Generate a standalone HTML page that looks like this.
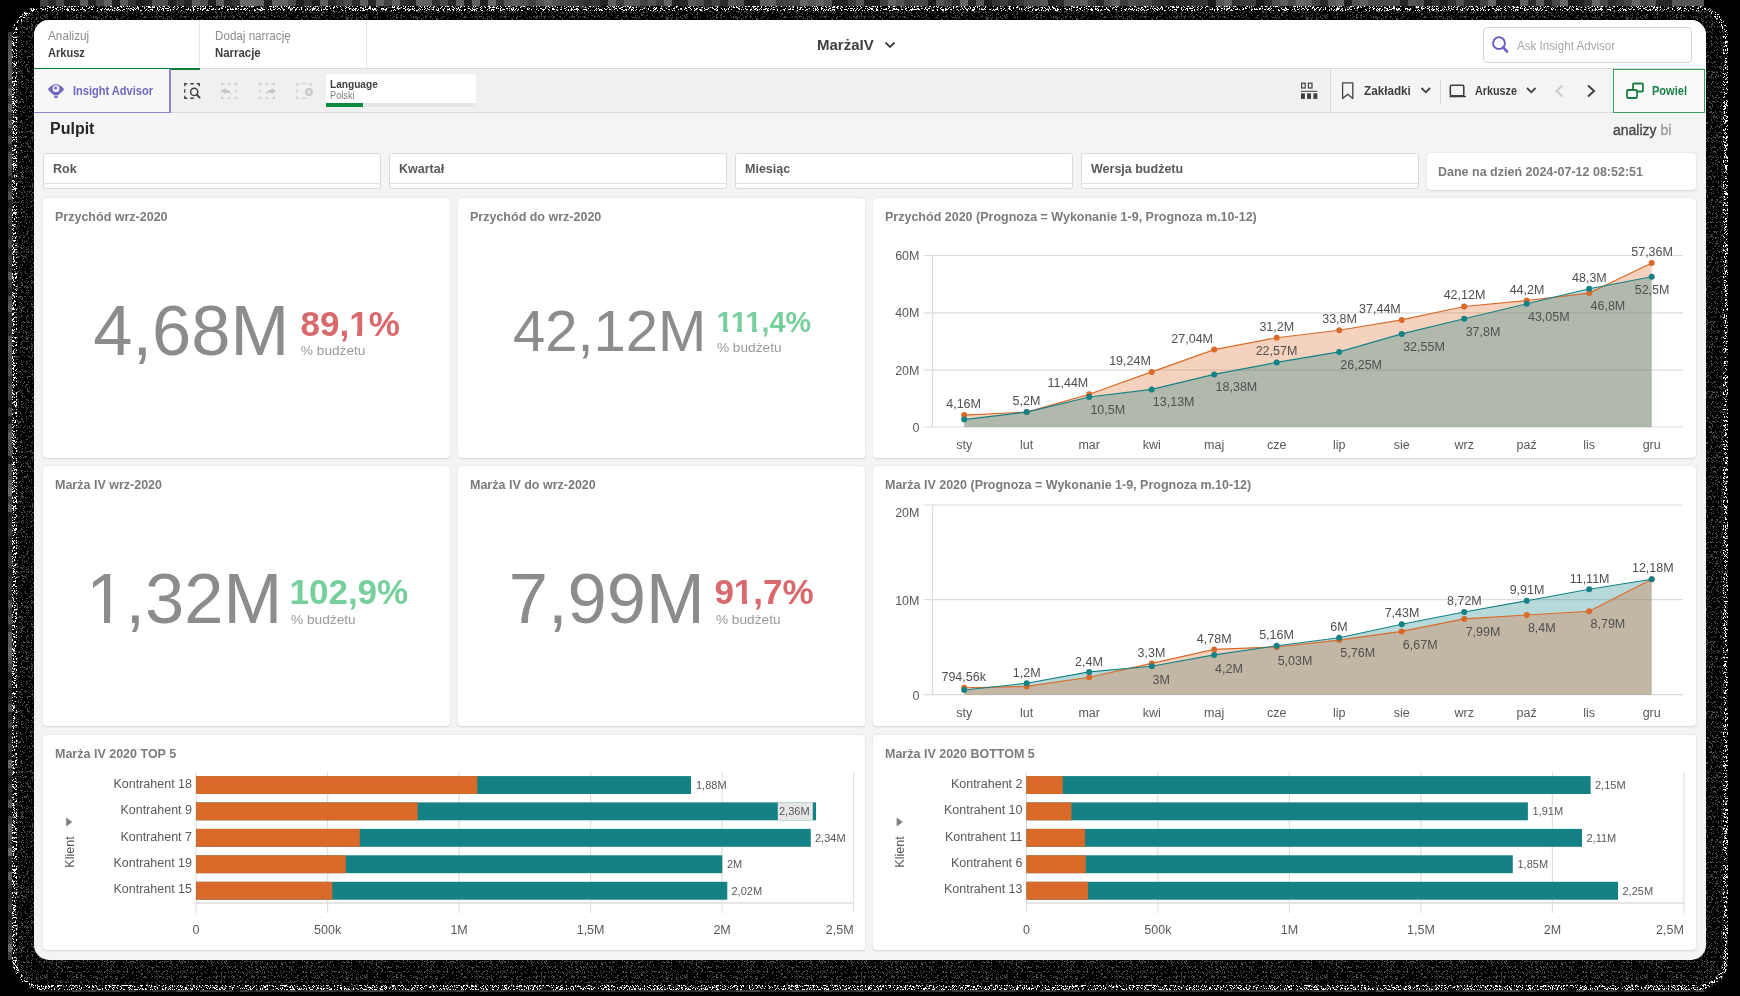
<!DOCTYPE html>
<html><head><meta charset="utf-8">
<style>
*{margin:0;padding:0;box-sizing:border-box}
html,body{width:1740px;height:996px;overflow:hidden;background:#000;font-family:"Liberation Sans",sans-serif}
#root{position:absolute;left:0;top:0;width:1740px;height:996px;will-change:transform}
.a{position:absolute;white-space:nowrap;line-height:1}
.card{position:absolute;background:#fff;border-radius:4px;box-shadow:0 0.5px 2px rgba(0,0,0,.14)}
.ttl{position:absolute;font-size:12.5px;font-weight:bold;color:#7b7b7b;white-space:nowrap;line-height:1}
.flt{position:absolute;top:153px;height:36px;background:#fff;border:1px solid #d9d9d9;border-radius:3px}
.flt span{position:absolute;left:9px;top:9px;font-size:12.5px;font-weight:bold;color:#595959;line-height:1}
.flt i{position:absolute;left:0;right:0;top:29px;height:1px;background:#e0e0e0}
svg{position:absolute;left:0;top:0;overflow:visible}
svg text{font-family:"Liberation Sans",sans-serif}
</style></head><body><div id="root">

<svg width="1740" height="996" style="left:0;top:0"><rect x="40" y="0" width="8" height="6" fill="rgb(66,66,66)"/><rect x="48" y="0" width="8" height="6" fill="rgb(44,44,44)"/><rect x="56" y="0" width="8" height="6" fill="rgb(75,75,75)"/><rect x="64" y="0" width="8" height="6" fill="rgb(31,31,31)"/><rect x="72" y="0" width="8" height="6" fill="rgb(34,34,34)"/><rect x="80" y="0" width="8" height="6" fill="rgb(93,93,93)"/><rect x="88" y="0" width="8" height="6" fill="rgb(37,37,37)"/><rect x="96" y="0" width="8" height="6" fill="rgb(71,71,71)"/><rect x="104" y="0" width="8" height="6" fill="rgb(99,99,99)"/><rect x="112" y="0" width="8" height="6" fill="rgb(32,32,32)"/><rect x="120" y="0" width="8" height="6" fill="rgb(89,89,89)"/><rect x="128" y="0" width="8" height="6" fill="rgb(52,52,52)"/><rect x="136" y="0" width="8" height="6" fill="rgb(29,29,29)"/><rect x="144" y="0" width="8" height="6" fill="rgb(36,36,36)"/><rect x="152" y="0" width="8" height="6" fill="rgb(80,80,80)"/><rect x="160" y="0" width="8" height="6" fill="rgb(78,78,78)"/><rect x="168" y="0" width="8" height="6" fill="rgb(33,33,33)"/><rect x="176" y="0" width="8" height="6" fill="rgb(55,55,55)"/><rect x="184" y="0" width="8" height="6" fill="rgb(36,36,36)"/><rect x="192" y="0" width="8" height="6" fill="rgb(95,95,95)"/><rect x="200" y="0" width="8" height="6" fill="rgb(79,79,79)"/><rect x="208" y="0" width="8" height="6" fill="rgb(32,32,32)"/><rect x="216" y="0" width="8" height="6" fill="rgb(97,97,97)"/><rect x="224" y="0" width="8" height="6" fill="rgb(40,40,40)"/><rect x="232" y="0" width="8" height="6" fill="rgb(53,53,53)"/><rect x="240" y="0" width="8" height="6" fill="rgb(105,105,105)"/><rect x="248" y="0" width="8" height="6" fill="rgb(105,105,105)"/><rect x="256" y="0" width="8" height="6" fill="rgb(99,99,99)"/><rect x="264" y="0" width="8" height="6" fill="rgb(32,32,32)"/><rect x="272" y="0" width="8" height="6" fill="rgb(98,98,98)"/><rect x="280" y="0" width="8" height="6" fill="rgb(99,99,99)"/><rect x="288" y="0" width="8" height="6" fill="rgb(75,75,75)"/><rect x="296" y="0" width="8" height="6" fill="rgb(31,31,31)"/><rect x="304" y="0" width="8" height="6" fill="rgb(53,53,53)"/><rect x="312" y="0" width="8" height="6" fill="rgb(30,30,30)"/><rect x="320" y="0" width="8" height="6" fill="rgb(96,96,96)"/><rect x="328" y="0" width="8" height="6" fill="rgb(42,42,42)"/><rect x="336" y="0" width="8" height="6" fill="rgb(62,62,62)"/><rect x="344" y="0" width="8" height="6" fill="rgb(78,78,78)"/><rect x="352" y="0" width="8" height="6" fill="rgb(43,43,43)"/><rect x="360" y="0" width="8" height="6" fill="rgb(94,94,94)"/><rect x="368" y="0" width="8" height="6" fill="rgb(40,40,40)"/><rect x="376" y="0" width="8" height="6" fill="rgb(98,98,98)"/><rect x="384" y="0" width="8" height="6" fill="rgb(64,64,64)"/><rect x="392" y="0" width="8" height="6" fill="rgb(96,96,96)"/><rect x="400" y="0" width="8" height="6" fill="rgb(48,48,48)"/><rect x="408" y="0" width="8" height="6" fill="rgb(38,38,38)"/><rect x="416" y="0" width="8" height="6" fill="rgb(99,99,99)"/><rect x="424" y="0" width="8" height="6" fill="rgb(98,98,98)"/><rect x="432" y="0" width="8" height="6" fill="rgb(49,49,49)"/><rect x="440" y="0" width="8" height="6" fill="rgb(72,72,72)"/><rect x="448" y="0" width="8" height="6" fill="rgb(37,37,37)"/><rect x="456" y="0" width="8" height="6" fill="rgb(95,95,95)"/><rect x="464" y="0" width="8" height="6" fill="rgb(33,33,33)"/><rect x="472" y="0" width="8" height="6" fill="rgb(97,97,97)"/><rect x="480" y="0" width="8" height="6" fill="rgb(32,32,32)"/><rect x="488" y="0" width="8" height="6" fill="rgb(104,104,104)"/><rect x="496" y="0" width="8" height="6" fill="rgb(51,51,51)"/><rect x="504" y="0" width="8" height="6" fill="rgb(88,88,88)"/><rect x="512" y="0" width="8" height="6" fill="rgb(93,93,93)"/><rect x="520" y="0" width="8" height="6" fill="rgb(79,79,79)"/><rect x="528" y="0" width="8" height="6" fill="rgb(65,65,65)"/><rect x="536" y="0" width="8" height="6" fill="rgb(84,84,84)"/><rect x="544" y="0" width="8" height="6" fill="rgb(99,99,99)"/><rect x="552" y="0" width="8" height="6" fill="rgb(83,83,83)"/><rect x="560" y="0" width="8" height="6" fill="rgb(71,71,71)"/><rect x="568" y="0" width="8" height="6" fill="rgb(63,63,63)"/><rect x="576" y="0" width="8" height="6" fill="rgb(56,56,56)"/><rect x="584" y="0" width="8" height="6" fill="rgb(48,48,48)"/><rect x="592" y="0" width="8" height="6" fill="rgb(56,56,56)"/><rect x="600" y="0" width="8" height="6" fill="rgb(35,35,35)"/><rect x="608" y="0" width="8" height="6" fill="rgb(98,98,98)"/><rect x="616" y="0" width="8" height="6" fill="rgb(63,63,63)"/><rect x="624" y="0" width="8" height="6" fill="rgb(92,92,92)"/><rect x="632" y="0" width="8" height="6" fill="rgb(88,88,88)"/><rect x="640" y="0" width="8" height="6" fill="rgb(68,68,68)"/><rect x="648" y="0" width="8" height="6" fill="rgb(82,82,82)"/><rect x="656" y="0" width="8" height="6" fill="rgb(61,61,61)"/><rect x="664" y="0" width="8" height="6" fill="rgb(102,102,102)"/><rect x="672" y="0" width="8" height="6" fill="rgb(34,34,34)"/><rect x="680" y="0" width="8" height="6" fill="rgb(40,40,40)"/><rect x="688" y="0" width="8" height="6" fill="rgb(90,90,90)"/><rect x="696" y="0" width="8" height="6" fill="rgb(78,78,78)"/><rect x="704" y="0" width="8" height="6" fill="rgb(46,46,46)"/><rect x="712" y="0" width="8" height="6" fill="rgb(68,68,68)"/><rect x="720" y="0" width="8" height="6" fill="rgb(44,44,44)"/><rect x="728" y="0" width="8" height="6" fill="rgb(87,87,87)"/><rect x="736" y="0" width="8" height="6" fill="rgb(78,78,78)"/><rect x="744" y="0" width="8" height="6" fill="rgb(30,30,30)"/><rect x="752" y="0" width="8" height="6" fill="rgb(34,34,34)"/><rect x="760" y="0" width="8" height="6" fill="rgb(96,96,96)"/><rect x="768" y="0" width="8" height="6" fill="rgb(98,98,98)"/><rect x="776" y="0" width="8" height="6" fill="rgb(65,65,65)"/><rect x="784" y="0" width="8" height="6" fill="rgb(68,68,68)"/><rect x="792" y="0" width="8" height="6" fill="rgb(69,69,69)"/><rect x="800" y="0" width="8" height="6" fill="rgb(101,101,101)"/><rect x="808" y="0" width="8" height="6" fill="rgb(88,88,88)"/><rect x="816" y="0" width="8" height="6" fill="rgb(99,99,99)"/><rect x="824" y="0" width="8" height="6" fill="rgb(83,83,83)"/><rect x="832" y="0" width="8" height="6" fill="rgb(33,33,33)"/><rect x="840" y="0" width="8" height="6" fill="rgb(36,36,36)"/><rect x="848" y="0" width="8" height="6" fill="rgb(59,59,59)"/><rect x="856" y="0" width="8" height="6" fill="rgb(85,85,85)"/><rect x="864" y="0" width="8" height="6" fill="rgb(33,33,33)"/><rect x="872" y="0" width="8" height="6" fill="rgb(32,32,32)"/><rect x="880" y="0" width="8" height="6" fill="rgb(64,64,64)"/><rect x="888" y="0" width="8" height="6" fill="rgb(98,98,98)"/><rect x="896" y="0" width="8" height="6" fill="rgb(82,82,82)"/><rect x="904" y="0" width="8" height="6" fill="rgb(61,61,61)"/><rect x="912" y="0" width="8" height="6" fill="rgb(74,74,74)"/><rect x="920" y="0" width="8" height="6" fill="rgb(69,69,69)"/><rect x="928" y="0" width="8" height="6" fill="rgb(27,27,27)"/><rect x="936" y="0" width="8" height="6" fill="rgb(84,84,84)"/><rect x="944" y="0" width="8" height="6" fill="rgb(70,70,70)"/><rect x="952" y="0" width="8" height="6" fill="rgb(46,46,46)"/><rect x="960" y="0" width="8" height="6" fill="rgb(103,103,103)"/><rect x="968" y="0" width="8" height="6" fill="rgb(39,39,39)"/><rect x="976" y="0" width="8" height="6" fill="rgb(88,88,88)"/><rect x="984" y="0" width="8" height="6" fill="rgb(32,32,32)"/><rect x="992" y="0" width="8" height="6" fill="rgb(52,52,52)"/><rect x="1000" y="0" width="8" height="6" fill="rgb(61,61,61)"/><rect x="1008" y="0" width="8" height="6" fill="rgb(41,41,41)"/><rect x="1016" y="0" width="8" height="6" fill="rgb(56,56,56)"/><rect x="1024" y="0" width="8" height="6" fill="rgb(75,75,75)"/><rect x="1032" y="0" width="8" height="6" fill="rgb(75,75,75)"/><rect x="1040" y="0" width="8" height="6" fill="rgb(88,88,88)"/><rect x="1048" y="0" width="8" height="6" fill="rgb(35,35,35)"/><rect x="1056" y="0" width="8" height="6" fill="rgb(46,46,46)"/><rect x="1064" y="0" width="8" height="6" fill="rgb(82,82,82)"/><rect x="1072" y="0" width="8" height="6" fill="rgb(76,76,76)"/><rect x="1080" y="0" width="8" height="6" fill="rgb(95,95,95)"/><rect x="1088" y="0" width="8" height="6" fill="rgb(60,60,60)"/><rect x="1096" y="0" width="8" height="6" fill="rgb(42,42,42)"/><rect x="1104" y="0" width="8" height="6" fill="rgb(80,80,80)"/><rect x="1112" y="0" width="8" height="6" fill="rgb(95,95,95)"/><rect x="1120" y="0" width="8" height="6" fill="rgb(60,60,60)"/><rect x="1128" y="0" width="8" height="6" fill="rgb(78,78,78)"/><rect x="1136" y="0" width="8" height="6" fill="rgb(70,70,70)"/><rect x="1144" y="0" width="8" height="6" fill="rgb(73,73,73)"/><rect x="1152" y="0" width="8" height="6" fill="rgb(54,54,54)"/><rect x="1160" y="0" width="8" height="6" fill="rgb(44,44,44)"/><rect x="1168" y="0" width="8" height="6" fill="rgb(35,35,35)"/><rect x="1176" y="0" width="8" height="6" fill="rgb(47,47,47)"/><rect x="1184" y="0" width="8" height="6" fill="rgb(44,44,44)"/><rect x="1192" y="0" width="8" height="6" fill="rgb(54,54,54)"/><rect x="1200" y="0" width="8" height="6" fill="rgb(54,54,54)"/><rect x="1208" y="0" width="8" height="6" fill="rgb(26,26,26)"/><rect x="1216" y="0" width="8" height="6" fill="rgb(87,87,87)"/><rect x="1224" y="0" width="8" height="6" fill="rgb(100,100,100)"/><rect x="1232" y="0" width="8" height="6" fill="rgb(48,48,48)"/><rect x="1240" y="0" width="8" height="6" fill="rgb(58,58,58)"/><rect x="1248" y="0" width="8" height="6" fill="rgb(61,61,61)"/><rect x="1256" y="0" width="8" height="6" fill="rgb(25,25,25)"/><rect x="1264" y="0" width="8" height="6" fill="rgb(43,43,43)"/><rect x="1272" y="0" width="8" height="6" fill="rgb(78,78,78)"/><rect x="1280" y="0" width="8" height="6" fill="rgb(93,93,93)"/><rect x="1288" y="0" width="8" height="6" fill="rgb(72,72,72)"/><rect x="1296" y="0" width="8" height="6" fill="rgb(103,103,103)"/><rect x="1304" y="0" width="8" height="6" fill="rgb(97,97,97)"/><rect x="1312" y="0" width="8" height="6" fill="rgb(65,65,65)"/><rect x="1320" y="0" width="8" height="6" fill="rgb(41,41,41)"/><rect x="1328" y="0" width="8" height="6" fill="rgb(90,90,90)"/><rect x="1336" y="0" width="8" height="6" fill="rgb(104,104,104)"/><rect x="1344" y="0" width="8" height="6" fill="rgb(31,31,31)"/><rect x="1352" y="0" width="8" height="6" fill="rgb(83,83,83)"/><rect x="1360" y="0" width="8" height="6" fill="rgb(96,96,96)"/><rect x="1368" y="0" width="8" height="6" fill="rgb(75,75,75)"/><rect x="1376" y="0" width="8" height="6" fill="rgb(75,75,75)"/><rect x="1384" y="0" width="8" height="6" fill="rgb(76,76,76)"/><rect x="1392" y="0" width="8" height="6" fill="rgb(75,75,75)"/><rect x="1400" y="0" width="8" height="6" fill="rgb(38,38,38)"/><rect x="1408" y="0" width="8" height="6" fill="rgb(86,86,86)"/><rect x="1416" y="0" width="8" height="6" fill="rgb(76,76,76)"/><rect x="1424" y="0" width="8" height="6" fill="rgb(32,32,32)"/><rect x="1432" y="0" width="8" height="6" fill="rgb(49,49,49)"/><rect x="1440" y="0" width="8" height="6" fill="rgb(33,33,33)"/><rect x="1448" y="0" width="8" height="6" fill="rgb(51,51,51)"/><rect x="1456" y="0" width="8" height="6" fill="rgb(81,81,81)"/><rect x="1464" y="0" width="8" height="6" fill="rgb(45,45,45)"/><rect x="1472" y="0" width="8" height="6" fill="rgb(39,39,39)"/><rect x="1480" y="0" width="8" height="6" fill="rgb(68,68,68)"/><rect x="1488" y="0" width="8" height="6" fill="rgb(101,101,101)"/><rect x="1496" y="0" width="8" height="6" fill="rgb(31,31,31)"/><rect x="1504" y="0" width="8" height="6" fill="rgb(38,38,38)"/><rect x="1512" y="0" width="8" height="6" fill="rgb(25,25,25)"/><rect x="1520" y="0" width="8" height="6" fill="rgb(97,97,97)"/><rect x="1528" y="0" width="8" height="6" fill="rgb(44,44,44)"/><rect x="1536" y="0" width="8" height="6" fill="rgb(93,93,93)"/><rect x="1544" y="0" width="8" height="6" fill="rgb(37,37,37)"/><rect x="1552" y="0" width="8" height="6" fill="rgb(71,71,71)"/><rect x="1560" y="0" width="8" height="6" fill="rgb(103,103,103)"/><rect x="1568" y="0" width="8" height="6" fill="rgb(28,28,28)"/><rect x="1576" y="0" width="8" height="6" fill="rgb(34,34,34)"/><rect x="1584" y="0" width="8" height="6" fill="rgb(51,51,51)"/><rect x="1592" y="0" width="8" height="6" fill="rgb(103,103,103)"/><rect x="1600" y="0" width="8" height="6" fill="rgb(73,73,73)"/><rect x="1608" y="0" width="8" height="6" fill="rgb(44,44,44)"/><rect x="1616" y="0" width="8" height="6" fill="rgb(57,57,57)"/><rect x="1624" y="0" width="8" height="6" fill="rgb(69,69,69)"/><rect x="1632" y="0" width="8" height="6" fill="rgb(102,102,102)"/><rect x="1640" y="0" width="8" height="6" fill="rgb(71,71,71)"/><rect x="1648" y="0" width="8" height="6" fill="rgb(85,85,85)"/><rect x="1656" y="0" width="8" height="6" fill="rgb(40,40,40)"/><rect x="1664" y="0" width="8" height="6" fill="rgb(39,39,39)"/><rect x="1672" y="0" width="8" height="6" fill="rgb(87,87,87)"/><rect x="1680" y="0" width="8" height="6" fill="rgb(84,84,84)"/><rect x="1688" y="0" width="8" height="6" fill="rgb(86,86,86)"/><rect x="1696" y="0" width="8" height="6" fill="rgb(86,86,86)"/><rect x="40" y="990" width="8" height="2" fill="rgb(39,39,39)"/><rect x="48" y="990" width="8" height="2" fill="rgb(25,25,25)"/><rect x="56" y="990" width="8" height="2" fill="rgb(29,29,29)"/><rect x="64" y="990" width="8" height="2" fill="rgb(26,26,26)"/><rect x="72" y="990" width="8" height="2" fill="rgb(67,67,67)"/><rect x="80" y="990" width="8" height="2" fill="rgb(41,41,41)"/><rect x="88" y="990" width="8" height="2" fill="rgb(67,67,67)"/><rect x="96" y="990" width="8" height="2" fill="rgb(36,36,36)"/><rect x="104" y="990" width="8" height="2" fill="rgb(50,50,50)"/><rect x="112" y="990" width="8" height="2" fill="rgb(64,64,64)"/><rect x="120" y="990" width="8" height="2" fill="rgb(30,30,30)"/><rect x="128" y="990" width="8" height="2" fill="rgb(53,53,53)"/><rect x="136" y="990" width="8" height="2" fill="rgb(21,21,21)"/><rect x="144" y="990" width="8" height="2" fill="rgb(33,33,33)"/><rect x="152" y="990" width="8" height="2" fill="rgb(53,53,53)"/><rect x="160" y="990" width="8" height="2" fill="rgb(43,43,43)"/><rect x="168" y="990" width="8" height="2" fill="rgb(29,29,29)"/><rect x="176" y="990" width="8" height="2" fill="rgb(64,64,64)"/><rect x="184" y="990" width="8" height="2" fill="rgb(54,54,54)"/><rect x="192" y="990" width="8" height="2" fill="rgb(21,21,21)"/><rect x="200" y="990" width="8" height="2" fill="rgb(68,68,68)"/><rect x="208" y="990" width="8" height="2" fill="rgb(53,53,53)"/><rect x="216" y="990" width="8" height="2" fill="rgb(39,39,39)"/><rect x="224" y="990" width="8" height="2" fill="rgb(61,61,61)"/><rect x="232" y="990" width="8" height="2" fill="rgb(25,25,25)"/><rect x="240" y="990" width="8" height="2" fill="rgb(64,64,64)"/><rect x="248" y="990" width="8" height="2" fill="rgb(36,36,36)"/><rect x="256" y="990" width="8" height="2" fill="rgb(53,53,53)"/><rect x="264" y="990" width="8" height="2" fill="rgb(43,43,43)"/><rect x="272" y="990" width="8" height="2" fill="rgb(30,30,30)"/><rect x="280" y="990" width="8" height="2" fill="rgb(42,42,42)"/><rect x="288" y="990" width="8" height="2" fill="rgb(69,69,69)"/><rect x="296" y="990" width="8" height="2" fill="rgb(34,34,34)"/><rect x="304" y="990" width="8" height="2" fill="rgb(54,54,54)"/><rect x="312" y="990" width="8" height="2" fill="rgb(54,54,54)"/><rect x="320" y="990" width="8" height="2" fill="rgb(69,69,69)"/><rect x="328" y="990" width="8" height="2" fill="rgb(52,52,52)"/><rect x="336" y="990" width="8" height="2" fill="rgb(41,41,41)"/><rect x="344" y="990" width="8" height="2" fill="rgb(60,60,60)"/><rect x="352" y="990" width="8" height="2" fill="rgb(34,34,34)"/><rect x="360" y="990" width="8" height="2" fill="rgb(59,59,59)"/><rect x="368" y="990" width="8" height="2" fill="rgb(70,70,70)"/><rect x="376" y="990" width="8" height="2" fill="rgb(68,68,68)"/><rect x="384" y="990" width="8" height="2" fill="rgb(32,32,32)"/><rect x="392" y="990" width="8" height="2" fill="rgb(35,35,35)"/><rect x="400" y="990" width="8" height="2" fill="rgb(45,45,45)"/><rect x="408" y="990" width="8" height="2" fill="rgb(67,67,67)"/><rect x="416" y="990" width="8" height="2" fill="rgb(34,34,34)"/><rect x="424" y="990" width="8" height="2" fill="rgb(32,32,32)"/><rect x="432" y="990" width="8" height="2" fill="rgb(53,53,53)"/><rect x="440" y="990" width="8" height="2" fill="rgb(51,51,51)"/><rect x="448" y="990" width="8" height="2" fill="rgb(42,42,42)"/><rect x="456" y="990" width="8" height="2" fill="rgb(66,66,66)"/><rect x="464" y="990" width="8" height="2" fill="rgb(21,21,21)"/><rect x="472" y="990" width="8" height="2" fill="rgb(21,21,21)"/><rect x="480" y="990" width="8" height="2" fill="rgb(70,70,70)"/><rect x="488" y="990" width="8" height="2" fill="rgb(37,37,37)"/><rect x="496" y="990" width="8" height="2" fill="rgb(50,50,50)"/><rect x="504" y="990" width="8" height="2" fill="rgb(36,36,36)"/><rect x="512" y="990" width="8" height="2" fill="rgb(32,32,32)"/><rect x="520" y="990" width="8" height="2" fill="rgb(64,64,64)"/><rect x="528" y="990" width="8" height="2" fill="rgb(58,58,58)"/><rect x="536" y="990" width="8" height="2" fill="rgb(42,42,42)"/><rect x="544" y="990" width="8" height="2" fill="rgb(48,48,48)"/><rect x="552" y="990" width="8" height="2" fill="rgb(66,66,66)"/><rect x="560" y="990" width="8" height="2" fill="rgb(42,42,42)"/><rect x="568" y="990" width="8" height="2" fill="rgb(43,43,43)"/><rect x="576" y="990" width="8" height="2" fill="rgb(25,25,25)"/><rect x="584" y="990" width="8" height="2" fill="rgb(34,34,34)"/><rect x="592" y="990" width="8" height="2" fill="rgb(26,26,26)"/><rect x="600" y="990" width="8" height="2" fill="rgb(34,34,34)"/><rect x="608" y="990" width="8" height="2" fill="rgb(50,50,50)"/><rect x="616" y="990" width="8" height="2" fill="rgb(32,32,32)"/><rect x="624" y="990" width="8" height="2" fill="rgb(41,41,41)"/><rect x="632" y="990" width="8" height="2" fill="rgb(33,33,33)"/><rect x="640" y="990" width="8" height="2" fill="rgb(50,50,50)"/><rect x="648" y="990" width="8" height="2" fill="rgb(59,59,59)"/><rect x="656" y="990" width="8" height="2" fill="rgb(59,59,59)"/><rect x="664" y="990" width="8" height="2" fill="rgb(20,20,20)"/><rect x="672" y="990" width="8" height="2" fill="rgb(50,50,50)"/><rect x="680" y="990" width="8" height="2" fill="rgb(61,61,61)"/><rect x="688" y="990" width="8" height="2" fill="rgb(42,42,42)"/><rect x="696" y="990" width="8" height="2" fill="rgb(61,61,61)"/><rect x="704" y="990" width="8" height="2" fill="rgb(25,25,25)"/><rect x="712" y="990" width="8" height="2" fill="rgb(62,62,62)"/><rect x="720" y="990" width="8" height="2" fill="rgb(27,27,27)"/><rect x="728" y="990" width="8" height="2" fill="rgb(44,44,44)"/><rect x="736" y="990" width="8" height="2" fill="rgb(70,70,70)"/><rect x="744" y="990" width="8" height="2" fill="rgb(65,65,65)"/><rect x="752" y="990" width="8" height="2" fill="rgb(68,68,68)"/><rect x="760" y="990" width="8" height="2" fill="rgb(32,32,32)"/><rect x="768" y="990" width="8" height="2" fill="rgb(50,50,50)"/><rect x="776" y="990" width="8" height="2" fill="rgb(31,31,31)"/><rect x="784" y="990" width="8" height="2" fill="rgb(47,47,47)"/><rect x="792" y="990" width="8" height="2" fill="rgb(70,70,70)"/><rect x="800" y="990" width="8" height="2" fill="rgb(60,60,60)"/><rect x="808" y="990" width="8" height="2" fill="rgb(41,41,41)"/><rect x="816" y="990" width="8" height="2" fill="rgb(25,25,25)"/><rect x="824" y="990" width="8" height="2" fill="rgb(66,66,66)"/><rect x="832" y="990" width="8" height="2" fill="rgb(45,45,45)"/><rect x="840" y="990" width="8" height="2" fill="rgb(49,49,49)"/><rect x="848" y="990" width="8" height="2" fill="rgb(45,45,45)"/><rect x="856" y="990" width="8" height="2" fill="rgb(67,67,67)"/><rect x="864" y="990" width="8" height="2" fill="rgb(25,25,25)"/><rect x="872" y="990" width="8" height="2" fill="rgb(66,66,66)"/><rect x="880" y="990" width="8" height="2" fill="rgb(30,30,30)"/><rect x="888" y="990" width="8" height="2" fill="rgb(30,30,30)"/><rect x="896" y="990" width="8" height="2" fill="rgb(28,28,28)"/><rect x="904" y="990" width="8" height="2" fill="rgb(21,21,21)"/><rect x="912" y="990" width="8" height="2" fill="rgb(29,29,29)"/><rect x="920" y="990" width="8" height="2" fill="rgb(57,57,57)"/><rect x="928" y="990" width="8" height="2" fill="rgb(49,49,49)"/><rect x="936" y="990" width="8" height="2" fill="rgb(61,61,61)"/><rect x="944" y="990" width="8" height="2" fill="rgb(29,29,29)"/><rect x="952" y="990" width="8" height="2" fill="rgb(59,59,59)"/><rect x="960" y="990" width="8" height="2" fill="rgb(58,58,58)"/><rect x="968" y="990" width="8" height="2" fill="rgb(50,50,50)"/><rect x="976" y="990" width="8" height="2" fill="rgb(62,62,62)"/><rect x="984" y="990" width="8" height="2" fill="rgb(42,42,42)"/><rect x="992" y="990" width="8" height="2" fill="rgb(29,29,29)"/><rect x="1000" y="990" width="8" height="2" fill="rgb(55,55,55)"/><rect x="1008" y="990" width="8" height="2" fill="rgb(55,55,55)"/><rect x="1016" y="990" width="8" height="2" fill="rgb(28,28,28)"/><rect x="1024" y="990" width="8" height="2" fill="rgb(21,21,21)"/><rect x="1032" y="990" width="8" height="2" fill="rgb(20,20,20)"/><rect x="1040" y="990" width="8" height="2" fill="rgb(66,66,66)"/><rect x="1048" y="990" width="8" height="2" fill="rgb(61,61,61)"/><rect x="1056" y="990" width="8" height="2" fill="rgb(26,26,26)"/><rect x="1064" y="990" width="8" height="2" fill="rgb(53,53,53)"/><rect x="1072" y="990" width="8" height="2" fill="rgb(67,67,67)"/><rect x="1080" y="990" width="8" height="2" fill="rgb(28,28,28)"/><rect x="1088" y="990" width="8" height="2" fill="rgb(47,47,47)"/><rect x="1096" y="990" width="8" height="2" fill="rgb(32,32,32)"/><rect x="1104" y="990" width="8" height="2" fill="rgb(33,33,33)"/><rect x="1112" y="990" width="8" height="2" fill="rgb(21,21,21)"/><rect x="1120" y="990" width="8" height="2" fill="rgb(36,36,36)"/><rect x="1128" y="990" width="8" height="2" fill="rgb(33,33,33)"/><rect x="1136" y="990" width="8" height="2" fill="rgb(38,38,38)"/><rect x="1144" y="990" width="8" height="2" fill="rgb(52,52,52)"/><rect x="1152" y="990" width="8" height="2" fill="rgb(35,35,35)"/><rect x="1160" y="990" width="8" height="2" fill="rgb(68,68,68)"/><rect x="1168" y="990" width="8" height="2" fill="rgb(57,57,57)"/><rect x="1176" y="990" width="8" height="2" fill="rgb(40,40,40)"/><rect x="1184" y="990" width="8" height="2" fill="rgb(36,36,36)"/><rect x="1192" y="990" width="8" height="2" fill="rgb(54,54,54)"/><rect x="1200" y="990" width="8" height="2" fill="rgb(46,46,46)"/><rect x="1208" y="990" width="8" height="2" fill="rgb(28,28,28)"/><rect x="1216" y="990" width="8" height="2" fill="rgb(23,23,23)"/><rect x="1224" y="990" width="8" height="2" fill="rgb(67,67,67)"/><rect x="1232" y="990" width="8" height="2" fill="rgb(42,42,42)"/><rect x="1240" y="990" width="8" height="2" fill="rgb(49,49,49)"/><rect x="1248" y="990" width="8" height="2" fill="rgb(62,62,62)"/><rect x="1256" y="990" width="8" height="2" fill="rgb(57,57,57)"/><rect x="1264" y="990" width="8" height="2" fill="rgb(53,53,53)"/><rect x="1272" y="990" width="8" height="2" fill="rgb(46,46,46)"/><rect x="1280" y="990" width="8" height="2" fill="rgb(52,52,52)"/><rect x="1288" y="990" width="8" height="2" fill="rgb(28,28,28)"/><rect x="1296" y="990" width="8" height="2" fill="rgb(54,54,54)"/><rect x="1304" y="990" width="8" height="2" fill="rgb(29,29,29)"/><rect x="1312" y="990" width="8" height="2" fill="rgb(53,53,53)"/><rect x="1320" y="990" width="8" height="2" fill="rgb(52,52,52)"/><rect x="1328" y="990" width="8" height="2" fill="rgb(21,21,21)"/><rect x="1336" y="990" width="8" height="2" fill="rgb(48,48,48)"/><rect x="1344" y="990" width="8" height="2" fill="rgb(69,69,69)"/><rect x="1352" y="990" width="8" height="2" fill="rgb(31,31,31)"/><rect x="1360" y="990" width="8" height="2" fill="rgb(58,58,58)"/><rect x="1368" y="990" width="8" height="2" fill="rgb(20,20,20)"/><rect x="1376" y="990" width="8" height="2" fill="rgb(69,69,69)"/><rect x="1384" y="990" width="8" height="2" fill="rgb(29,29,29)"/><rect x="1392" y="990" width="8" height="2" fill="rgb(31,31,31)"/><rect x="1400" y="990" width="8" height="2" fill="rgb(29,29,29)"/><rect x="1408" y="990" width="8" height="2" fill="rgb(50,50,50)"/><rect x="1416" y="990" width="8" height="2" fill="rgb(59,59,59)"/><rect x="1424" y="990" width="8" height="2" fill="rgb(66,66,66)"/><rect x="1432" y="990" width="8" height="2" fill="rgb(27,27,27)"/><rect x="1440" y="990" width="8" height="2" fill="rgb(55,55,55)"/><rect x="1448" y="990" width="8" height="2" fill="rgb(23,23,23)"/><rect x="1456" y="990" width="8" height="2" fill="rgb(40,40,40)"/><rect x="1464" y="990" width="8" height="2" fill="rgb(63,63,63)"/><rect x="1472" y="990" width="8" height="2" fill="rgb(53,53,53)"/><rect x="1480" y="990" width="8" height="2" fill="rgb(53,53,53)"/><rect x="1488" y="990" width="8" height="2" fill="rgb(55,55,55)"/><rect x="1496" y="990" width="8" height="2" fill="rgb(50,50,50)"/><rect x="1504" y="990" width="8" height="2" fill="rgb(70,70,70)"/><rect x="1512" y="990" width="8" height="2" fill="rgb(69,69,69)"/><rect x="1520" y="990" width="8" height="2" fill="rgb(26,26,26)"/><rect x="1528" y="990" width="8" height="2" fill="rgb(55,55,55)"/><rect x="1536" y="990" width="8" height="2" fill="rgb(23,23,23)"/><rect x="1544" y="990" width="8" height="2" fill="rgb(35,35,35)"/><rect x="1552" y="990" width="8" height="2" fill="rgb(32,32,32)"/><rect x="1560" y="990" width="8" height="2" fill="rgb(37,37,37)"/><rect x="1568" y="990" width="8" height="2" fill="rgb(22,22,22)"/><rect x="1576" y="990" width="8" height="2" fill="rgb(69,69,69)"/><rect x="1584" y="990" width="8" height="2" fill="rgb(26,26,26)"/><rect x="1592" y="990" width="8" height="2" fill="rgb(52,52,52)"/><rect x="1600" y="990" width="8" height="2" fill="rgb(48,48,48)"/><rect x="1608" y="990" width="8" height="2" fill="rgb(55,55,55)"/><rect x="1616" y="990" width="8" height="2" fill="rgb(21,21,21)"/><rect x="1624" y="990" width="8" height="2" fill="rgb(68,68,68)"/><rect x="1632" y="990" width="8" height="2" fill="rgb(24,24,24)"/><rect x="1640" y="990" width="8" height="2" fill="rgb(48,48,48)"/><rect x="1648" y="990" width="8" height="2" fill="rgb(40,40,40)"/><rect x="1656" y="990" width="8" height="2" fill="rgb(59,59,59)"/><rect x="1664" y="990" width="8" height="2" fill="rgb(52,52,52)"/><rect x="1672" y="990" width="8" height="2" fill="rgb(58,58,58)"/><rect x="1680" y="990" width="8" height="2" fill="rgb(52,52,52)"/><rect x="1688" y="990" width="8" height="2" fill="rgb(32,32,32)"/><rect x="1696" y="990" width="8" height="2" fill="rgb(64,64,64)"/><rect x="8" y="32" width="4" height="8" fill="rgb(60,60,60)"/><rect x="8" y="40" width="4" height="8" fill="rgb(82,82,82)"/><rect x="8" y="48" width="4" height="8" fill="rgb(90,90,90)"/><rect x="8" y="56" width="4" height="8" fill="rgb(93,93,93)"/><rect x="8" y="64" width="4" height="8" fill="rgb(86,86,86)"/><rect x="8" y="72" width="4" height="8" fill="rgb(89,89,89)"/><rect x="8" y="80" width="4" height="8" fill="rgb(56,56,56)"/><rect x="8" y="88" width="4" height="8" fill="rgb(91,91,91)"/><rect x="8" y="96" width="4" height="8" fill="rgb(58,58,58)"/><rect x="8" y="104" width="4" height="8" fill="rgb(96,96,96)"/><rect x="8" y="112" width="4" height="8" fill="rgb(50,50,50)"/><rect x="8" y="120" width="4" height="8" fill="rgb(82,82,82)"/><rect x="8" y="128" width="4" height="8" fill="rgb(42,42,42)"/><rect x="8" y="136" width="4" height="8" fill="rgb(78,78,78)"/><rect x="8" y="144" width="4" height="8" fill="rgb(40,40,40)"/><rect x="8" y="152" width="4" height="8" fill="rgb(75,75,75)"/><rect x="8" y="160" width="4" height="8" fill="rgb(81,81,81)"/><rect x="8" y="168" width="4" height="8" fill="rgb(65,65,65)"/><rect x="8" y="176" width="4" height="8" fill="rgb(34,34,34)"/><rect x="8" y="184" width="4" height="8" fill="rgb(55,55,55)"/><rect x="8" y="192" width="4" height="8" fill="rgb(79,79,79)"/><rect x="8" y="200" width="4" height="8" fill="rgb(34,34,34)"/><rect x="8" y="208" width="4" height="8" fill="rgb(52,52,52)"/><rect x="8" y="216" width="4" height="8" fill="rgb(63,63,63)"/><rect x="8" y="224" width="4" height="8" fill="rgb(40,40,40)"/><rect x="8" y="232" width="4" height="8" fill="rgb(44,44,44)"/><rect x="8" y="240" width="4" height="8" fill="rgb(71,71,71)"/><rect x="8" y="248" width="4" height="8" fill="rgb(43,43,43)"/><rect x="8" y="256" width="4" height="8" fill="rgb(57,57,57)"/><rect x="8" y="264" width="4" height="8" fill="rgb(42,42,42)"/><rect x="8" y="272" width="4" height="8" fill="rgb(84,84,84)"/><rect x="8" y="280" width="4" height="8" fill="rgb(53,53,53)"/><rect x="8" y="288" width="4" height="8" fill="rgb(37,37,37)"/><rect x="8" y="296" width="4" height="8" fill="rgb(75,75,75)"/><rect x="8" y="304" width="4" height="8" fill="rgb(87,87,87)"/><rect x="8" y="312" width="4" height="8" fill="rgb(45,45,45)"/><rect x="8" y="320" width="4" height="8" fill="rgb(53,53,53)"/><rect x="8" y="328" width="4" height="8" fill="rgb(45,45,45)"/><rect x="8" y="336" width="4" height="8" fill="rgb(80,80,80)"/><rect x="8" y="344" width="4" height="8" fill="rgb(90,90,90)"/><rect x="8" y="352" width="4" height="8" fill="rgb(76,76,76)"/><rect x="8" y="360" width="4" height="8" fill="rgb(68,68,68)"/><rect x="8" y="368" width="4" height="8" fill="rgb(78,78,78)"/><rect x="8" y="376" width="4" height="8" fill="rgb(50,50,50)"/><rect x="8" y="384" width="4" height="8" fill="rgb(70,70,70)"/><rect x="8" y="392" width="4" height="8" fill="rgb(65,65,65)"/><rect x="8" y="400" width="4" height="8" fill="rgb(36,36,36)"/><rect x="8" y="408" width="4" height="8" fill="rgb(71,71,71)"/><rect x="8" y="416" width="4" height="8" fill="rgb(27,27,27)"/><rect x="8" y="424" width="4" height="8" fill="rgb(68,68,68)"/><rect x="8" y="432" width="4" height="8" fill="rgb(95,95,95)"/><rect x="8" y="440" width="4" height="8" fill="rgb(83,83,83)"/><rect x="8" y="448" width="4" height="8" fill="rgb(81,81,81)"/><rect x="8" y="456" width="4" height="8" fill="rgb(27,27,27)"/><rect x="8" y="464" width="4" height="8" fill="rgb(74,74,74)"/><rect x="8" y="472" width="4" height="8" fill="rgb(67,67,67)"/><rect x="8" y="480" width="4" height="8" fill="rgb(91,91,91)"/><rect x="8" y="488" width="4" height="8" fill="rgb(104,104,104)"/><rect x="8" y="496" width="4" height="8" fill="rgb(62,62,62)"/><rect x="8" y="504" width="4" height="8" fill="rgb(90,90,90)"/><rect x="8" y="512" width="4" height="8" fill="rgb(33,33,33)"/><rect x="8" y="520" width="4" height="8" fill="rgb(39,39,39)"/><rect x="8" y="528" width="4" height="8" fill="rgb(54,54,54)"/><rect x="8" y="536" width="4" height="8" fill="rgb(38,38,38)"/><rect x="8" y="544" width="4" height="8" fill="rgb(35,35,35)"/><rect x="8" y="552" width="4" height="8" fill="rgb(58,58,58)"/><rect x="8" y="560" width="4" height="8" fill="rgb(59,59,59)"/><rect x="8" y="568" width="4" height="8" fill="rgb(30,30,30)"/><rect x="8" y="576" width="4" height="8" fill="rgb(48,48,48)"/><rect x="8" y="584" width="4" height="8" fill="rgb(59,59,59)"/><rect x="8" y="592" width="4" height="8" fill="rgb(41,41,41)"/><rect x="8" y="600" width="4" height="8" fill="rgb(79,79,79)"/><rect x="8" y="608" width="4" height="8" fill="rgb(58,58,58)"/><rect x="8" y="616" width="4" height="8" fill="rgb(76,76,76)"/><rect x="8" y="624" width="4" height="8" fill="rgb(44,44,44)"/><rect x="8" y="632" width="4" height="8" fill="rgb(93,93,93)"/><rect x="8" y="640" width="4" height="8" fill="rgb(90,90,90)"/><rect x="8" y="648" width="4" height="8" fill="rgb(98,98,98)"/><rect x="8" y="656" width="4" height="8" fill="rgb(88,88,88)"/><rect x="8" y="664" width="4" height="8" fill="rgb(66,66,66)"/><rect x="8" y="672" width="4" height="8" fill="rgb(36,36,36)"/><rect x="8" y="680" width="4" height="8" fill="rgb(60,60,60)"/><rect x="8" y="688" width="4" height="8" fill="rgb(32,32,32)"/><rect x="8" y="696" width="4" height="8" fill="rgb(48,48,48)"/><rect x="8" y="704" width="4" height="8" fill="rgb(79,79,79)"/><rect x="8" y="712" width="4" height="8" fill="rgb(34,34,34)"/><rect x="8" y="720" width="4" height="8" fill="rgb(59,59,59)"/><rect x="8" y="728" width="4" height="8" fill="rgb(27,27,27)"/><rect x="8" y="736" width="4" height="8" fill="rgb(36,36,36)"/><rect x="8" y="744" width="4" height="8" fill="rgb(58,58,58)"/><rect x="8" y="752" width="4" height="8" fill="rgb(35,35,35)"/><rect x="8" y="760" width="4" height="8" fill="rgb(102,102,102)"/><rect x="8" y="768" width="4" height="8" fill="rgb(53,53,53)"/><rect x="8" y="776" width="4" height="8" fill="rgb(33,33,33)"/><rect x="8" y="784" width="4" height="8" fill="rgb(58,58,58)"/><rect x="8" y="792" width="4" height="8" fill="rgb(40,40,40)"/><rect x="8" y="800" width="4" height="8" fill="rgb(83,83,83)"/><rect x="8" y="808" width="4" height="8" fill="rgb(26,26,26)"/><rect x="8" y="816" width="4" height="8" fill="rgb(68,68,68)"/><rect x="8" y="824" width="4" height="8" fill="rgb(95,95,95)"/><rect x="8" y="832" width="4" height="8" fill="rgb(78,78,78)"/><rect x="8" y="840" width="4" height="8" fill="rgb(59,59,59)"/><rect x="8" y="848" width="4" height="8" fill="rgb(104,104,104)"/><rect x="8" y="856" width="4" height="8" fill="rgb(41,41,41)"/><rect x="8" y="864" width="4" height="8" fill="rgb(30,30,30)"/><rect x="8" y="872" width="4" height="8" fill="rgb(92,92,92)"/><rect x="8" y="880" width="4" height="8" fill="rgb(55,55,55)"/><rect x="8" y="888" width="4" height="8" fill="rgb(39,39,39)"/><rect x="8" y="896" width="4" height="8" fill="rgb(45,45,45)"/><rect x="8" y="904" width="4" height="8" fill="rgb(58,58,58)"/><rect x="8" y="912" width="4" height="8" fill="rgb(31,31,31)"/><rect x="8" y="920" width="4" height="8" fill="rgb(48,48,48)"/><rect x="8" y="928" width="4" height="8" fill="rgb(50,50,50)"/><rect x="8" y="936" width="4" height="8" fill="rgb(64,64,64)"/><rect x="8" y="944" width="4" height="8" fill="rgb(105,105,105)"/><rect x="8" y="952" width="4" height="8" fill="rgb(64,64,64)"/><defs><filter id="nz" x="0" y="0" width="1740" height="996" filterUnits="userSpaceOnUse"><feTurbulence type="turbulence" baseFrequency="0.75" numOctaves="1" seed="5"/><feColorMatrix type="matrix" values="0 0 0 0 1  0 0 0 0 1  0 0 0 0 1  40 0 0 0 -10"/></filter><filter id="nz2" x="0" y="0" width="1740" height="996" filterUnits="userSpaceOnUse" color-interpolation-filters="sRGB"><feTurbulence type="turbulence" baseFrequency="0.8" numOctaves="1" seed="11"/><feColorMatrix type="matrix" values="0 0 0 0 0.3  0 0 0 0 0.3  0 0 0 0 0.3  40 0 0 0 -12"/></filter><clipPath id="rimclip"><rect x="12" y="6" width="1716" height="984" rx="30"/></clipPath><mask id="nm" maskUnits="userSpaceOnUse" x="0" y="0" width="1740" height="996"><rect x="0" y="0" width="1740" height="996" fill="#fff" filter="url(#nz)"/></mask></defs><rect x="12" y="6" width="1716" height="984" rx="30" fill="#000"/><g clip-path="url(#rimclip)"><rect x="0" y="0" width="1740" height="996" fill="#fff" filter="url(#nz2)"/><rect x="12" y="6" width="1716" height="984" rx="30" fill="none" stroke="#fff" stroke-width="10" mask="url(#nm)"/></g></svg>
<div class="a" style="left:34px;top:20px;width:1672px;height:940px;background:#f4f4f4;border-radius:15px"></div>
<div class="a" style="left:34px;top:20px;width:1672px;height:49px;background:#fff;border-top-left-radius:15px;border-top-right-radius:15px"></div>
<div class="a" style="left:34px;top:68px;width:1671px;height:1px;background:#dcdcdc"></div>
<div class="a" style="left:199px;top:20px;width:1px;height:48px;background:#e8e8e8"></div>
<div class="a" style="left:366px;top:20px;width:1px;height:48px;background:#e8e8e8"></div>
<div class="a" style="left:48px;top:30px;font-size:12px;color:#8c8c8c;transform:scaleX(0.98);transform-origin:0 0">Analizuj</div>
<div class="a" style="left:48px;top:47px;font-size:12px;color:#404040;font-weight:bold;transform:scaleX(0.92);transform-origin:0 0">Arkusz</div>
<div class="a" style="left:215px;top:30px;font-size:12px;color:#8c8c8c;transform:scaleX(0.97);transform-origin:0 0">Dodaj narrację</div>
<div class="a" style="left:215px;top:47px;font-size:12px;color:#404040;font-weight:bold;transform:scaleX(0.95);transform-origin:0 0">Narracje</div>
<div class="a" style="left:817px;top:37px;font-size:15px;color:#404040;font-weight:bold;">MarżaIV</div>
<svg><path d="M885.5 42.5 L890 47 L894.5 42.5" fill="none" stroke="#404040" stroke-width="1.8"/></svg>
<div class="a" style="left:1483px;top:27px;width:209px;height:36px;background:#fff;border:1px solid #d6d6d6;border-radius:4px"></div>
<svg><circle cx="1499" cy="43.2" r="5.9" fill="none" stroke="#6a5fc1" stroke-width="2"/><path d="M1503.2 47.4 L1507 51.6" stroke="#6a5fc1" stroke-width="2.6" stroke-linecap="round"/></svg>
<div class="a" style="left:1517px;top:39.5px;font-size:12.5px;color:#a8a8a8;transform:scaleX(0.93);transform-origin:0 0">Ask Insight Advisor</div>
<div class="a" style="left:34px;top:69px;width:1671px;height:44px;background:#f0f0f0;border-bottom:1px solid #dcdcdc"></div>
<div class="a" style="left:34px;top:67.5px;width:166px;height:2.5px;background:#0b7b35"></div>
<div class="a" style="left:34px;top:69px;width:137px;height:44px;background:#f8f8f8;border-right:2px solid #8c87c9;border-bottom:1.5px solid #8c87c9"></div>
<svg><path d="M47.8 89.2 Q56 79.2 64.2 89.2 Q60 94.2 57.2 95.6 L54.8 95.6 Q52 94.2 47.8 89.2Z" fill="#6e68be"/><circle cx="56" cy="88.7" r="3.4" fill="#f8f8f8"/><circle cx="55.6" cy="88" r="1.5" fill="#6e68be"/><path d="M53.8 96.2 h4.4 l-0.8 1.8 h-2.8z" fill="#6e68be"/></svg>
<div class="a" style="left:73px;top:85px;font-size:12px;color:#6e68be;font-weight:bold;transform:scaleX(0.92);transform-origin:0 0">Insight Advisor</div>
<svg><path d="M184.75 86.25 V83.75 H187.25 M190.25 83.75 H193.75 M196.75 83.75 H199.25 V86.25 M184.75 89.25 V92.75 M184.75 95.75 V98.25 H187.25 M190.25 98.25 H193.75 " fill="none" stroke="#404040" stroke-width="1.3"/></svg>
<svg><circle cx="194.2" cy="91.9" r="3.6" fill="none" stroke="#404040" stroke-width="1.5"/><path d="M196.9 94.6 L199.6 97.6" stroke="#404040" stroke-width="1.9" stroke-linecap="round"/></svg>
<svg><path d="M221.75 86.25 V83.75 H224.25 M227.25 83.75 H230.75 M233.75 83.75 H236.25 V86.25 M221.75 89.25 V92.75 M221.75 95.75 V98.25 H224.25 M227.25 98.25 H230.75 M236.25 89.25 V92.75 M233.75 98.25 H236.25 V95.75" fill="none" stroke="#d2d2d2" stroke-width="1.3"/></svg>
<svg><path d="M221.8 91 l4 -3.3 v2.1 q4.6 0.2 5.6 4.6 q-1.8 -2.1 -5.6 -1.9 v2.1z" fill="#c4c4c4"/></svg>
<svg><path d="M259.75 86.25 V83.75 H262.25 M265.25 83.75 H268.75 M271.75 83.75 H274.25 V86.25 M259.75 89.25 V92.75 M259.75 95.75 V98.25 H262.25 M265.25 98.25 H268.75 M274.25 89.25 V92.75 M271.75 98.25 H274.25 V95.75" fill="none" stroke="#d2d2d2" stroke-width="1.3"/></svg>
<svg><path d="M275.5 91 l-4 -3.3 v2.1 q-4.6 0.2 -5.6 4.6 q1.8 -2.1 5.6 -1.9 v2.1z" fill="#c4c4c4"/></svg>
<svg><path d="M296.75 86.25 V83.75 H299.25 M302.25 83.75 H305.75 M308.75 83.75 H311.25 V86.25 M296.75 89.25 V92.75 M296.75 95.75 V98.25 H299.25 M302.25 98.25 H305.75 " fill="none" stroke="#d2d2d2" stroke-width="1.3"/></svg>
<svg><circle cx="308.9" cy="92.1" r="4" fill="#c8c8c8"/><path d="M307.2 90.4 l3.4 3.4 M310.6 90.4 l-3.4 3.4" stroke="#f0f0f0" stroke-width="1.1"/></svg>
<div class="a" style="left:326px;top:74px;width:150px;height:33px;background:#fff;border-radius:2px"></div>
<div class="a" style="left:326px;top:103px;width:150px;height:4px;background:#e6e6e6"></div>
<div class="a" style="left:326px;top:103px;width:37px;height:4px;background:#0b8a3e"></div>
<div class="a" style="left:330px;top:79px;font-size:11px;color:#404040;font-weight:bold;transform:scaleX(0.92);transform-origin:0 0">Language</div>
<div class="a" style="left:330px;top:91px;font-size:10px;color:#808080;transform:scaleX(0.92);transform-origin:0 0">Polski</div>
<svg><g fill="#404040"><rect x="1301.6" y="83.2" width="3.6" height="4.8" fill="none" stroke="#404040" stroke-width="1.2"/><rect x="1308.4" y="83.2" width="3.6" height="4.8" fill="none" stroke="#404040" stroke-width="1.2"/><rect x="1301" y="90.8" width="16.3" height="1"/><rect x="1301" y="93.3" width="3.9" height="5.6"/><rect x="1307.1" y="93.3" width="3.9" height="5.6"/><rect x="1313.4" y="93.3" width="3.9" height="5.6"/></g></svg>
<div class="a" style="left:1330px;top:69px;width:1px;height:43px;background:#dcdcdc"></div>
<div class="a" style="left:1331px;top:69px;width:282px;height:43px;background:#f4f4f4"></div>
<svg><path d="M1342.6 82.8 h10.2 v15.8 l-5.1 -4.3 l-5.1 4.3z" fill="none" stroke="#404040" stroke-width="1.3" stroke-linejoin="round"/></svg>
<div class="a" style="left:1364px;top:85px;font-size:12px;color:#404040;font-weight:bold;transform:scaleX(0.975);transform-origin:0 0">Zakładki</div>
<svg><path d="M1421.5 88 L1425.8 92.3 L1430 88" fill="none" stroke="#404040" stroke-width="1.8"/></svg>
<div class="a" style="left:1440px;top:80px;width:1px;height:24px;background:#d6d6d6"></div>
<svg><rect x="1450.3" y="85.3" width="13.5" height="10.5" rx="1.5" fill="none" stroke="#404040" stroke-width="1.6"/><path d="M1449.5 96.5 h16.5" stroke="#404040" stroke-width="1.6"/></svg>
<div class="a" style="left:1475px;top:85px;font-size:12px;color:#404040;font-weight:bold;transform:scaleX(0.9);transform-origin:0 0">Arkusze</div>
<svg><path d="M1527 88 L1531.3 92.3 L1535.5 88" fill="none" stroke="#404040" stroke-width="1.8"/></svg>
<svg><path d="M1562.5 85.5 L1556.5 91 L1562.5 96.5" fill="none" stroke="#c8c8c8" stroke-width="1.8"/><path d="M1588 85.5 L1594 91 L1588 96.5" fill="none" stroke="#404040" stroke-width="2"/></svg>
<div class="a" style="left:1613px;top:69px;width:92px;height:44px;background:#fafafa;border:1px solid #3aa060"></div>
<svg><rect x="1633" y="83.5" width="10" height="8" fill="none" stroke="#1a7f45" stroke-width="1.8" rx="1"/><rect x="1627" y="90" width="10" height="8" rx="1" fill="#fafafa" stroke="#1a7f45" stroke-width="1.8"/></svg>
<div class="a" style="left:1652px;top:85px;font-size:12px;color:#1a7f45;font-weight:bold;transform:scaleX(0.92);transform-origin:0 0">Powiel</div>
<div class="a" style="left:50px;top:121px;font-size:16px;color:#262626;font-weight:bold;">Pulpit</div>
<div class="a" style="left:1613px;top:122.5px;font-size:14px;color:#484848;-webkit-text-stroke:0.35px #484848">analizy <span style="color:#9a9a9a;-webkit-text-stroke:0.35px #9a9a9a">bi</span></div>
<div class="flt" style="left:43px;width:338px"><span>Rok</span><i></i></div>
<div class="flt" style="left:389px;width:338px"><span>Kwartał</span><i></i></div>
<div class="flt" style="left:735px;width:338px"><span>Miesiąc</span><i></i></div>
<div class="flt" style="left:1081px;width:338px"><span>Wersja budżetu</span><i></i></div>
<div class="card" style="left:1427px;top:153px;width:269px;height:37px"></div>
<div class="a" style="left:1438px;top:166px;font-size:12.5px;color:#7b7b7b;font-weight:bold;">Dane na dzień 2024-07-12 08:52:51</div>
<div class="card" style="left:43px;top:198px;width:407px;height:260px"></div>
<div class="card" style="left:458px;top:198px;width:407px;height:260px"></div>
<div class="card" style="left:873px;top:198px;width:823px;height:260px"></div>
<div class="card" style="left:43px;top:466px;width:407px;height:260px"></div>
<div class="card" style="left:458px;top:466px;width:407px;height:260px"></div>
<div class="card" style="left:873px;top:466px;width:823px;height:260px"></div>
<div class="card" style="left:43px;top:735px;width:822px;height:215px"></div>
<div class="card" style="left:873px;top:735px;width:823px;height:215px"></div>
<div class="ttl" style="left:55px;top:211px">Przychód wrz-2020</div>
<div class="ttl" style="left:470px;top:211px">Przychód do wrz-2020</div>
<div class="ttl" style="left:885px;top:211px">Przychód 2020 (Prognoza = Wykonanie 1-9, Prognoza m.10-12)</div>
<div class="ttl" style="left:55px;top:479px">Marża IV wrz-2020</div>
<div class="ttl" style="left:470px;top:479px">Marża IV do wrz-2020</div>
<div class="ttl" style="left:885px;top:479px">Marża IV 2020 (Prognoza = Wykonanie 1-9, Prognoza m.10-12)</div>
<div class="ttl" style="left:55px;top:748px">Marża IV 2020 TOP 5</div>
<div class="ttl" style="left:885px;top:748px">Marża IV 2020 BOTTOM 5</div>
<div class="a" style="left:93.3px;top:295.62px;font-size:70.5px;color:#8c8c8c">4,68M</div>
<div class="a" style="left:300.6px;top:305.77px;font-size:35px;color:#d86a6d;font-weight:bold">89,1%</div>
<div class="a" style="left:300.8px;top:343.70px;font-size:13.7px;color:#9a9a9a">% budżetu</div>
<div class="a" style="left:512.9px;top:302.00px;font-size:58px;color:#8c8c8c">42,12M</div>
<div class="a" style="left:716.6px;top:308.42px;font-size:28.8px;color:#77d09c;font-weight:bold">111,4%</div>
<div class="a" style="left:716.9px;top:340.70px;font-size:13.7px;color:#9a9a9a">% budżetu</div>
<div class="a" style="left:86.2px;top:564.42px;font-size:70.5px;color:#8c8c8c">1,32M</div>
<div class="a" style="left:289.5px;top:573.77px;font-size:35px;color:#77d09c;font-weight:bold">102,9%</div>
<div class="a" style="left:291px;top:612.50px;font-size:13.7px;color:#9a9a9a">% budżetu</div>
<div class="a" style="left:508.70000000000005px;top:564.42px;font-size:70.5px;color:#8c8c8c">7,99M</div>
<div class="a" style="left:714.4px;top:573.77px;font-size:35px;color:#d86a6d;font-weight:bold">91,7%</div>
<div class="a" style="left:715.9px;top:612.50px;font-size:13.7px;color:#9a9a9a">% budżetu</div>
<div class="a" style="left:717px;top:329px;width:6.00px;height:3px;background:#fff"></div>
<div class="a" style="left:727.6px;top:329px;width:9.80px;height:3px;background:#fff"></div>
<div class="a" style="left:742px;top:329px;width:10.00px;height:3px;background:#fff"></div>
<div class="a" style="left:756.6px;top:329px;width:5.40px;height:3px;background:#fff"></div>
<div class="a" style="left:350px;top:332px;width:7.00px;height:4px;background:#fff"></div>
<div class="a" style="left:362.3px;top:332px;width:5.70px;height:4px;background:#fff"></div>
<div class="a" style="left:735px;top:600px;width:7.00px;height:4px;background:#fff"></div>
<div class="a" style="left:747px;top:600px;width:6.00px;height:4px;background:#fff"></div>
<div class="a" style="left:89.5px;top:617px;width:14.50px;height:6px;background:#fff"></div>
<div class="a" style="left:110.4px;top:617px;width:11.60px;height:6px;background:#fff"></div>
<svg width="1740" height="996"><path d="M924 255.5 H1683" stroke="#dcdcdc" stroke-width="1.2"/><path d="M924 312.8 H1683" stroke="#dcdcdc" stroke-width="1.2"/><path d="M924 370.2 H1683" stroke="#dcdcdc" stroke-width="1.2"/><path d="M924 427 H1683" stroke="#dcdcdc" stroke-width="1.2"/><path d="M932.4 255.5 V427" stroke="#dcdcdc" stroke-width="1.2"/><polygon points="964.2,427 964.2,415.1 1026.7,412.1 1089.2,394.3 1151.7,371.9 1214.2,349.6 1276.7,337.7 1339.2,330.3 1401.7,319.9 1464.2,306.5 1526.7,300.5 1589.2,293.1 1651.7,262.9 1651.7,427" fill="#da6a29" fill-opacity="0.3"/><polygon points="964.2,427 964.2,419.6 1026.7,412.1 1089.2,397.0 1151.7,389.4 1214.2,374.4 1276.7,362.4 1339.2,351.9 1401.7,333.9 1464.2,318.8 1526.7,303.8 1589.2,288.8 1651.7,276.8 1651.7,427" fill="#148285" fill-opacity="0.3"/><polyline points="964.2,415.1 1026.7,412.1 1089.2,394.3 1151.7,371.9 1214.2,349.6 1276.7,337.7 1339.2,330.3 1401.7,319.9 1464.2,306.5 1526.7,300.5 1589.2,293.1 1651.7,262.9" fill="none" stroke="#da6a29" stroke-width="1.15"/><circle cx="964.2" cy="415.1" r="3" fill="#da6a29"/><circle cx="1026.7" cy="412.1" r="3" fill="#da6a29"/><circle cx="1089.2" cy="394.3" r="3" fill="#da6a29"/><circle cx="1151.7" cy="371.9" r="3" fill="#da6a29"/><circle cx="1214.2" cy="349.6" r="3" fill="#da6a29"/><circle cx="1276.7" cy="337.7" r="3" fill="#da6a29"/><circle cx="1339.2" cy="330.3" r="3" fill="#da6a29"/><circle cx="1401.7" cy="319.9" r="3" fill="#da6a29"/><circle cx="1464.2" cy="306.5" r="3" fill="#da6a29"/><circle cx="1526.7" cy="300.5" r="3" fill="#da6a29"/><circle cx="1589.2" cy="293.1" r="3" fill="#da6a29"/><circle cx="1651.7" cy="262.9" r="3" fill="#da6a29"/><polyline points="964.2,419.6 1026.7,412.1 1089.2,397.0 1151.7,389.4 1214.2,374.4 1276.7,362.4 1339.2,351.9 1401.7,333.9 1464.2,318.8 1526.7,303.8 1589.2,288.8 1651.7,276.8" fill="none" stroke="#148285" stroke-width="1.15"/><circle cx="964.2" cy="419.6" r="3" fill="#148285"/><circle cx="1026.7" cy="412.1" r="3" fill="#148285"/><circle cx="1089.2" cy="397.0" r="3" fill="#148285"/><circle cx="1151.7" cy="389.4" r="3" fill="#148285"/><circle cx="1214.2" cy="374.4" r="3" fill="#148285"/><circle cx="1276.7" cy="362.4" r="3" fill="#148285"/><circle cx="1339.2" cy="351.9" r="3" fill="#148285"/><circle cx="1401.7" cy="333.9" r="3" fill="#148285"/><circle cx="1464.2" cy="318.8" r="3" fill="#148285"/><circle cx="1526.7" cy="303.8" r="3" fill="#148285"/><circle cx="1589.2" cy="288.8" r="3" fill="#148285"/><circle cx="1651.7" cy="276.8" r="3" fill="#148285"/><text x="919.5" y="260.0" text-anchor="end" font-size="12.5" fill="#595959">60M</text><text x="919.5" y="317.3" text-anchor="end" font-size="12.5" fill="#595959">40M</text><text x="919.5" y="374.7" text-anchor="end" font-size="12.5" fill="#595959">20M</text><text x="919.5" y="431.5" text-anchor="end" font-size="12.5" fill="#595959">0</text><text x="964.2" y="448.5" text-anchor="middle" font-size="12.5" fill="#595959">sty</text><text x="1026.7" y="448.5" text-anchor="middle" font-size="12.5" fill="#595959">lut</text><text x="1089.2" y="448.5" text-anchor="middle" font-size="12.5" fill="#595959">mar</text><text x="1151.7" y="448.5" text-anchor="middle" font-size="12.5" fill="#595959">kwi</text><text x="1214.2" y="448.5" text-anchor="middle" font-size="12.5" fill="#595959">maj</text><text x="1276.7" y="448.5" text-anchor="middle" font-size="12.5" fill="#595959">cze</text><text x="1339.2" y="448.5" text-anchor="middle" font-size="12.5" fill="#595959">lip</text><text x="1401.7" y="448.5" text-anchor="middle" font-size="12.5" fill="#595959">sie</text><text x="1464.2" y="448.5" text-anchor="middle" font-size="12.5" fill="#595959">wrz</text><text x="1526.7" y="448.5" text-anchor="middle" font-size="12.5" fill="#595959">paź</text><text x="1589.2" y="448.5" text-anchor="middle" font-size="12.5" fill="#595959">lis</text><text x="1651.7" y="448.5" text-anchor="middle" font-size="12.5" fill="#595959">gru</text><text x="963.6" y="408.1" text-anchor="middle" font-size="12.5" fill="#505050">4,16M</text><text x="1026.5" y="404.7" text-anchor="middle" font-size="12.5" fill="#505050">5,2M</text><text x="1067.9" y="387.0" text-anchor="middle" font-size="12.5" fill="#505050">11,44M</text><text x="1107.8" y="413.7" text-anchor="middle" font-size="12.5" fill="#505050">10,5M</text><text x="1130.0" y="364.5" text-anchor="middle" font-size="12.5" fill="#505050">19,24M</text><text x="1173.7" y="405.9" text-anchor="middle" font-size="12.5" fill="#505050">13,13M</text><text x="1192.2" y="342.6" text-anchor="middle" font-size="12.5" fill="#505050">27,04M</text><text x="1236.4" y="391.2" text-anchor="middle" font-size="12.5" fill="#505050">18,38M</text><text x="1276.8" y="331.4" text-anchor="middle" font-size="12.5" fill="#505050">31,2M</text><text x="1276.5" y="355.3" text-anchor="middle" font-size="12.5" fill="#505050">22,57M</text><text x="1339.6" y="323.2" text-anchor="middle" font-size="12.5" fill="#505050">33,8M</text><text x="1361.2" y="368.8" text-anchor="middle" font-size="12.5" fill="#505050">26,25M</text><text x="1379.9" y="312.5" text-anchor="middle" font-size="12.5" fill="#505050">37,44M</text><text x="1424.0" y="350.5" text-anchor="middle" font-size="12.5" fill="#505050">32,55M</text><text x="1464.5" y="299.3" text-anchor="middle" font-size="12.5" fill="#505050">42,12M</text><text x="1483.0" y="335.9" text-anchor="middle" font-size="12.5" fill="#505050">37,8M</text><text x="1527.0" y="293.7" text-anchor="middle" font-size="12.5" fill="#505050">44,2M</text><text x="1548.8" y="321.0" text-anchor="middle" font-size="12.5" fill="#505050">43,05M</text><text x="1589.4" y="282.2" text-anchor="middle" font-size="12.5" fill="#505050">48,3M</text><text x="1607.9" y="309.7" text-anchor="middle" font-size="12.5" fill="#505050">46,8M</text><text x="1652.1" y="255.8" text-anchor="middle" font-size="12.5" fill="#505050">57,36M</text><text x="1652.1" y="294.3" text-anchor="middle" font-size="12.5" fill="#505050">52,5M</text></svg>
<svg width="1740" height="996"><path d="M924 505 H1683" stroke="#dcdcdc" stroke-width="1.2"/><path d="M924 599.7 H1683" stroke="#dcdcdc" stroke-width="1.2"/><path d="M924 694.7 H1683" stroke="#dcdcdc" stroke-width="1.2"/><path d="M932.4 505 V694.7" stroke="#dcdcdc" stroke-width="1.2"/><polygon points="964.2,694.7 964.2,690.0 1026.7,683.3 1089.2,671.9 1151.7,666.2 1214.2,654.9 1276.7,645.8 1339.2,637.8 1401.7,624.2 1464.2,612.0 1526.7,600.7 1589.2,589.3 1651.7,579.2 1651.7,694.7" fill="#148285" fill-opacity="0.3"/><polygon points="964.2,694.7 964.2,687.7 1026.7,686.4 1089.2,677.3 1151.7,663.4 1214.2,649.4 1276.7,647.0 1339.2,640.1 1401.7,631.4 1464.2,618.9 1526.7,615.0 1589.2,611.3 1651.7,579.2 1651.7,694.7" fill="#da6a29" fill-opacity="0.3"/><polyline points="964.2,687.7 1026.7,686.4 1089.2,677.3 1151.7,663.4 1214.2,649.4 1276.7,647.0 1339.2,640.1 1401.7,631.4 1464.2,618.9 1526.7,615.0 1589.2,611.3 1651.7,579.2" fill="none" stroke="#da6a29" stroke-width="1.15"/><circle cx="964.2" cy="687.7" r="3" fill="#da6a29"/><circle cx="1026.7" cy="686.4" r="3" fill="#da6a29"/><circle cx="1089.2" cy="677.3" r="3" fill="#da6a29"/><circle cx="1151.7" cy="663.4" r="3" fill="#da6a29"/><circle cx="1214.2" cy="649.4" r="3" fill="#da6a29"/><circle cx="1276.7" cy="647.0" r="3" fill="#da6a29"/><circle cx="1339.2" cy="640.1" r="3" fill="#da6a29"/><circle cx="1401.7" cy="631.4" r="3" fill="#da6a29"/><circle cx="1464.2" cy="618.9" r="3" fill="#da6a29"/><circle cx="1526.7" cy="615.0" r="3" fill="#da6a29"/><circle cx="1589.2" cy="611.3" r="3" fill="#da6a29"/><circle cx="1651.7" cy="579.2" r="3" fill="#da6a29"/><polyline points="964.2,690.0 1026.7,683.3 1089.2,671.9 1151.7,666.2 1214.2,654.9 1276.7,645.8 1339.2,637.8 1401.7,624.2 1464.2,612.0 1526.7,600.7 1589.2,589.3 1651.7,579.2" fill="none" stroke="#148285" stroke-width="1.15"/><circle cx="964.2" cy="690.0" r="3" fill="#148285"/><circle cx="1026.7" cy="683.3" r="3" fill="#148285"/><circle cx="1089.2" cy="671.9" r="3" fill="#148285"/><circle cx="1151.7" cy="666.2" r="3" fill="#148285"/><circle cx="1214.2" cy="654.9" r="3" fill="#148285"/><circle cx="1276.7" cy="645.8" r="3" fill="#148285"/><circle cx="1339.2" cy="637.8" r="3" fill="#148285"/><circle cx="1401.7" cy="624.2" r="3" fill="#148285"/><circle cx="1464.2" cy="612.0" r="3" fill="#148285"/><circle cx="1526.7" cy="600.7" r="3" fill="#148285"/><circle cx="1589.2" cy="589.3" r="3" fill="#148285"/><circle cx="1651.7" cy="579.2" r="3" fill="#148285"/><text x="919.5" y="516.5" text-anchor="end" font-size="12.5" fill="#595959">20M</text><text x="919.5" y="605.0" text-anchor="end" font-size="12.5" fill="#595959">10M</text><text x="919.5" y="699.5" text-anchor="end" font-size="12.5" fill="#595959">0</text><text x="964.2" y="716.9" text-anchor="middle" font-size="12.5" fill="#595959">sty</text><text x="1026.7" y="716.9" text-anchor="middle" font-size="12.5" fill="#595959">lut</text><text x="1089.2" y="716.9" text-anchor="middle" font-size="12.5" fill="#595959">mar</text><text x="1151.7" y="716.9" text-anchor="middle" font-size="12.5" fill="#595959">kwi</text><text x="1214.2" y="716.9" text-anchor="middle" font-size="12.5" fill="#595959">maj</text><text x="1276.7" y="716.9" text-anchor="middle" font-size="12.5" fill="#595959">cze</text><text x="1339.2" y="716.9" text-anchor="middle" font-size="12.5" fill="#595959">lip</text><text x="1401.7" y="716.9" text-anchor="middle" font-size="12.5" fill="#595959">sie</text><text x="1464.2" y="716.9" text-anchor="middle" font-size="12.5" fill="#595959">wrz</text><text x="1526.7" y="716.9" text-anchor="middle" font-size="12.5" fill="#595959">paź</text><text x="1589.2" y="716.9" text-anchor="middle" font-size="12.5" fill="#595959">lis</text><text x="1651.7" y="716.9" text-anchor="middle" font-size="12.5" fill="#595959">gru</text><text x="963.7" y="680.9" text-anchor="middle" font-size="12.5" fill="#505050">794,56k</text><text x="1026.7" y="676.7" text-anchor="middle" font-size="12.5" fill="#505050">1,2M</text><text x="1089.0" y="665.5" text-anchor="middle" font-size="12.5" fill="#505050">2,4M</text><text x="1151.5" y="657.0" text-anchor="middle" font-size="12.5" fill="#505050">3,3M</text><text x="1161.3" y="683.7" text-anchor="middle" font-size="12.5" fill="#505050">3M</text><text x="1214.2" y="643.0" text-anchor="middle" font-size="12.5" fill="#505050">4,78M</text><text x="1229.0" y="672.5" text-anchor="middle" font-size="12.5" fill="#505050">4,2M</text><text x="1276.5" y="639.3" text-anchor="middle" font-size="12.5" fill="#505050">5,16M</text><text x="1295.0" y="664.6" text-anchor="middle" font-size="12.5" fill="#505050">5,03M</text><text x="1339.0" y="630.9" text-anchor="middle" font-size="12.5" fill="#505050">6M</text><text x="1357.7" y="657.0" text-anchor="middle" font-size="12.5" fill="#505050">5,76M</text><text x="1402.0" y="617.1" text-anchor="middle" font-size="12.5" fill="#505050">7,43M</text><text x="1420.2" y="648.6" text-anchor="middle" font-size="12.5" fill="#505050">6,67M</text><text x="1464.4" y="605.0" text-anchor="middle" font-size="12.5" fill="#505050">8,72M</text><text x="1483.0" y="635.9" text-anchor="middle" font-size="12.5" fill="#505050">7,99M</text><text x="1527.0" y="593.8" text-anchor="middle" font-size="12.5" fill="#505050">9,91M</text><text x="1541.8" y="632.3" text-anchor="middle" font-size="12.5" fill="#505050">8,4M</text><text x="1589.6" y="582.5" text-anchor="middle" font-size="12.5" fill="#505050">11,11M</text><text x="1607.9" y="628.4" text-anchor="middle" font-size="12.5" fill="#505050">8,79M</text><text x="1652.8" y="571.9" text-anchor="middle" font-size="12.5" fill="#505050">12,18M</text></svg>
<svg width="1740" height="996"><path d="M196.1 772 V913" stroke="#e0e0e0" stroke-width="1.2"/><path d="M327.6 772 V913" stroke="#e0e0e0" stroke-width="1.2"/><path d="M459.1 772 V913" stroke="#e0e0e0" stroke-width="1.2"/><path d="M590.6 772 V913" stroke="#e0e0e0" stroke-width="1.2"/><path d="M722.1 772 V913" stroke="#e0e0e0" stroke-width="1.2"/><path d="M853.6 772 V913" stroke="#e0e0e0" stroke-width="1.2"/><path d="M196.1 903 H853.6" stroke="#dcdcdc" stroke-width="1.6"/><rect x="196.1" y="776.1" width="494.9" height="17.9" fill="#148285"/><rect x="196.1" y="776.1" width="281.1" height="17.9" fill="#da6a29"/><text x="192" y="787.7" text-anchor="end" font-size="12.5" fill="#595959">Kontrahent 18</text><text x="696" y="789.1" font-size="11" fill="#595959">1,88M</text><rect x="196.1" y="802.4" width="619.9" height="17.9" fill="#148285"/><rect x="196.1" y="802.4" width="221.5" height="17.9" fill="#da6a29"/><text x="192" y="814.0" text-anchor="end" font-size="12.5" fill="#595959">Kontrahent 9</text><rect x="777.8" y="802.4" width="35" height="17.9" fill="#e6e6e6"/><text x="779" y="815.4" font-size="11" fill="#595959">2,36M</text><rect x="196.1" y="828.9" width="614.7" height="17.9" fill="#148285"/><rect x="196.1" y="828.9" width="163.7" height="17.9" fill="#da6a29"/><text x="192" y="840.5" text-anchor="end" font-size="12.5" fill="#595959">Kontrahent 7</text><text x="815" y="841.9" font-size="11" fill="#595959">2,34M</text><rect x="196.1" y="855.3" width="526.2" height="17.9" fill="#148285"/><rect x="196.1" y="855.3" width="149.7" height="17.9" fill="#da6a29"/><text x="192" y="866.9" text-anchor="end" font-size="12.5" fill="#595959">Kontrahent 19</text><text x="727" y="868.2" font-size="11" fill="#595959">2M</text><rect x="196.1" y="881.8" width="531.2" height="17.9" fill="#148285"/><rect x="196.1" y="881.8" width="136.2" height="17.9" fill="#da6a29"/><text x="192" y="893.4" text-anchor="end" font-size="12.5" fill="#595959">Kontrahent 15</text><text x="731.5" y="894.8" font-size="11" fill="#595959">2,02M</text><text x="196.1" y="934.0" text-anchor="middle" font-size="12.5" fill="#595959">0</text><text x="327.6" y="934.0" text-anchor="middle" font-size="12.5" fill="#595959">500k</text><text x="459.1" y="934.0" text-anchor="middle" font-size="12.5" fill="#595959">1M</text><text x="590.6" y="934.0" text-anchor="middle" font-size="12.5" fill="#595959">1,5M</text><text x="722.1" y="934.0" text-anchor="middle" font-size="12.5" fill="#595959">2M</text><text x="853.6" y="934.0" text-anchor="end" font-size="12.5" fill="#595959">2,5M</text><text transform="translate(73.7 852) rotate(-90)" text-anchor="middle" font-size="12.5" fill="#595959">Klient</text><path d="M66.2 817.5 L72.2 822 L66.2 826.5Z" fill="#808080"/></svg>
<svg width="1740" height="996"><path d="M1026.4 772 V913" stroke="#e0e0e0" stroke-width="1.2"/><path d="M1157.9 772 V913" stroke="#e0e0e0" stroke-width="1.2"/><path d="M1289.4 772 V913" stroke="#e0e0e0" stroke-width="1.2"/><path d="M1420.9 772 V913" stroke="#e0e0e0" stroke-width="1.2"/><path d="M1552.4 772 V913" stroke="#e0e0e0" stroke-width="1.2"/><path d="M1683.9 772 V913" stroke="#e0e0e0" stroke-width="1.2"/><path d="M1026.4 903 H1683.9" stroke="#dcdcdc" stroke-width="1.6"/><rect x="1026.4" y="776.1" width="564.2" height="17.9" fill="#148285"/><rect x="1026.4" y="776.1" width="36.4" height="17.9" fill="#da6a29"/><text x="1022.5" y="787.7" text-anchor="end" font-size="12.5" fill="#595959">Kontrahent 2</text><text x="1595" y="789.1" font-size="11" fill="#595959">2,15M</text><rect x="1026.4" y="802.4" width="501.5" height="17.9" fill="#148285"/><rect x="1026.4" y="802.4" width="45.0" height="17.9" fill="#da6a29"/><text x="1022.5" y="814.0" text-anchor="end" font-size="12.5" fill="#595959">Kontrahent 10</text><text x="1532.5" y="815.4" font-size="11" fill="#595959">1,91M</text><rect x="1026.4" y="828.9" width="555.6" height="17.9" fill="#148285"/><rect x="1026.4" y="828.9" width="58.6" height="17.9" fill="#da6a29"/><text x="1022.5" y="840.5" text-anchor="end" font-size="12.5" fill="#595959">Kontrahent 11</text><text x="1586.5" y="841.9" font-size="11" fill="#595959">2,11M</text><rect x="1026.4" y="855.3" width="486.4" height="17.9" fill="#148285"/><rect x="1026.4" y="855.3" width="59.3" height="17.9" fill="#da6a29"/><text x="1022.5" y="866.9" text-anchor="end" font-size="12.5" fill="#595959">Kontrahent 6</text><text x="1517.5" y="868.2" font-size="11" fill="#595959">1,85M</text><rect x="1026.4" y="881.8" width="591.6" height="17.9" fill="#148285"/><rect x="1026.4" y="881.8" width="61.6" height="17.9" fill="#da6a29"/><text x="1022.5" y="893.4" text-anchor="end" font-size="12.5" fill="#595959">Kontrahent 13</text><text x="1622.5" y="894.8" font-size="11" fill="#595959">2,25M</text><text x="1026.4" y="934.0" text-anchor="middle" font-size="12.5" fill="#595959">0</text><text x="1157.9" y="934.0" text-anchor="middle" font-size="12.5" fill="#595959">500k</text><text x="1289.4" y="934.0" text-anchor="middle" font-size="12.5" fill="#595959">1M</text><text x="1420.9" y="934.0" text-anchor="middle" font-size="12.5" fill="#595959">1,5M</text><text x="1552.4" y="934.0" text-anchor="middle" font-size="12.5" fill="#595959">2M</text><text x="1683.9" y="934.0" text-anchor="end" font-size="12.5" fill="#595959">2,5M</text><text transform="translate(904.2 852) rotate(-90)" text-anchor="middle" font-size="12.5" fill="#595959">Klient</text><path d="M896.7 817.5 L902.7 822 L896.7 826.5Z" fill="#808080"/></svg>
</div></body></html>
